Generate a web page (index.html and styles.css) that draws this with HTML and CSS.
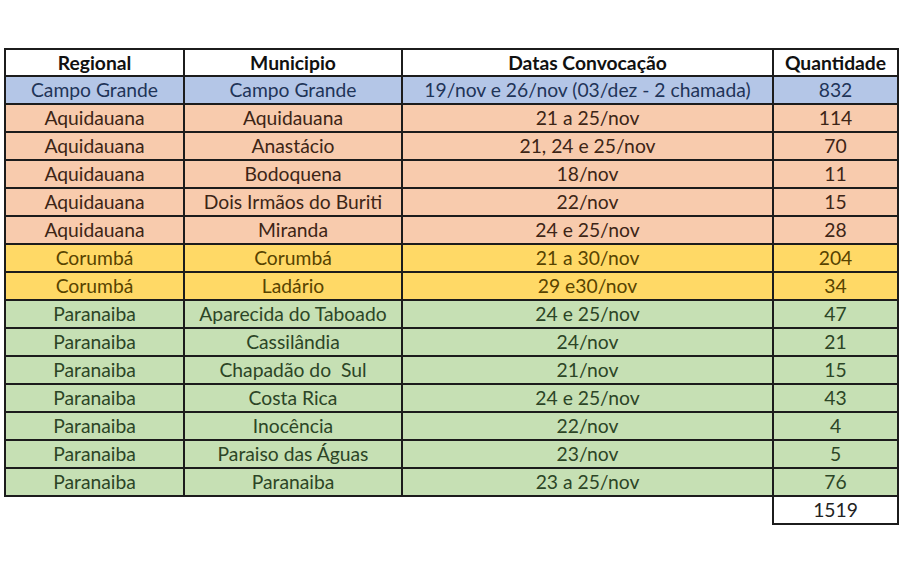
FILE: index.html
```html
<!DOCTYPE html>
<html lang="pt">
<head>
<meta charset="utf-8">
<title>Convocação</title>
<link rel="stylesheet" href="styles.css">
</head>
<body>
<table class="grid">
  <colgroup>
    <col class="c1"><col class="c2"><col class="c3"><col class="c4">
  </colgroup>
  <thead>
    <tr class="head"><th>Regional</th><th>Municipio</th><th>Datas Convocação</th><th>Quantidade</th></tr>
  </thead>
  <tbody>
    <tr class="blue"><td>Campo Grande</td><td>Campo Grande</td><td>19/nov e 26/nov (03/dez - 2 chamada)</td><td>832</td></tr>
    <tr class="peach"><td>Aquidauana</td><td>Aquidauana</td><td>21 a 25/nov</td><td>114</td></tr>
    <tr class="peach"><td>Aquidauana</td><td>Anastácio</td><td>21, 24 e 25/nov</td><td>70</td></tr>
    <tr class="peach"><td>Aquidauana</td><td>Bodoquena</td><td>18/nov</td><td>11</td></tr>
    <tr class="peach"><td>Aquidauana</td><td>Dois Irmãos do Buriti</td><td>22/nov</td><td>15</td></tr>
    <tr class="peach"><td>Aquidauana</td><td>Miranda</td><td>24 e 25/nov</td><td>28</td></tr>
    <tr class="gold"><td>Corumbá</td><td>Corumbá</td><td>21 a 30/nov</td><td>204</td></tr>
    <tr class="gold"><td>Corumbá</td><td>Ladário</td><td>29 e30/nov</td><td>34</td></tr>
    <tr class="green"><td>Paranaiba</td><td>Aparecida do Taboado</td><td>24 e 25/nov</td><td>47</td></tr>
    <tr class="green"><td>Paranaiba</td><td>Cassilândia</td><td>24/nov</td><td>21</td></tr>
    <tr class="green"><td>Paranaiba</td><td>Chapadão do&nbsp; Sul</td><td>21/nov</td><td>15</td></tr>
    <tr class="green"><td>Paranaiba</td><td>Costa Rica</td><td>24 e 25/nov</td><td>43</td></tr>
    <tr class="green"><td>Paranaiba</td><td>Inocência</td><td>22/nov</td><td>4</td></tr>
    <tr class="green"><td>Paranaiba</td><td>Paraiso das Águas</td><td>23/nov</td><td>5</td></tr>
    <tr class="green"><td>Paranaiba</td><td>Paranaiba</td><td>23 a 25/nov</td><td>76</td></tr>
  </tbody>
  <tfoot>
    <tr class="total"><td class="blank" colspan="3"></td><td class="sum">1519</td></tr>
  </tfoot>
</table>
</body>
</html>
```
FILE: styles.css
```css
html, body {
  margin: 0;
  padding: 0;
  background: #ffffff;
}
body {
  padding: 48px 0 0 4px;
  font-family: Lato, "Open Sans", "Liberation Sans", sans-serif;
}
.grid {
  border-collapse: collapse;
  table-layout: fixed;
  width: 893px;
  font-size: 19.3px;
}
.c1 { width: 179px; }
.c2 { width: 218px; }
.c3 { width: 371px; }
.c4 { width: 125px; }
.grid th, .grid td {
  border: 2px solid #1c1c1c;
  text-align: center;
  padding: 0;
  height: 26px;
  line-height: 26px;
  white-space: nowrap;
  overflow: hidden;
}
.head th {
  background: #ffffff;
  color: #111111;
  font-weight: bold;
  height: 25px;
  line-height: 25px;
}
.blue td { background: #b4c6e7; color: #1f3458; }
.peach td { background: #f8cbad; color: #3d2516; }
.gold td { background: #ffd966; color: #574300; }
.green td { background: #c6e0b4; color: #2c4526; }
.total td.blank {
  border: none;
  background: transparent;
}
.total td.sum {
  background: #ffffff;
  color: #222222;
}
```
